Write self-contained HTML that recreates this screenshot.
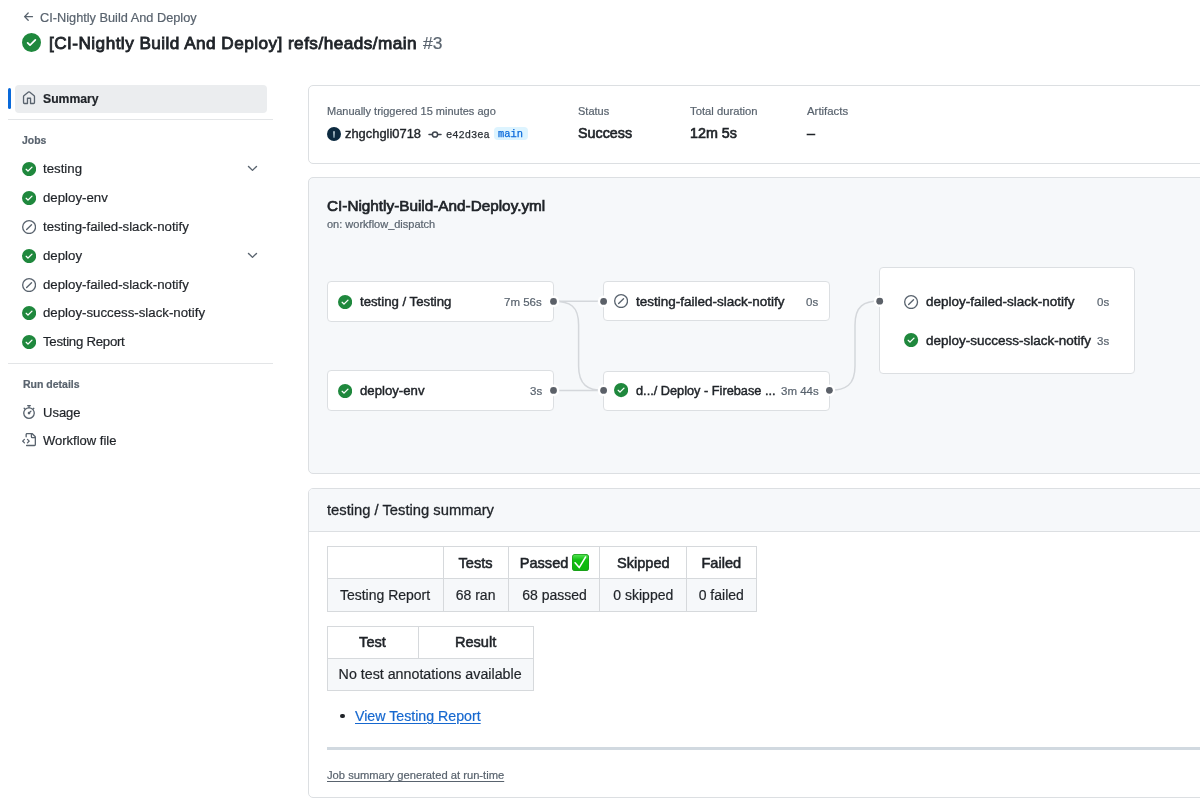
<!DOCTYPE html>
<html><head><meta charset="utf-8">
<style>
*{box-sizing:border-box;margin:0;padding:0}
html,body{width:1200px;height:802px;overflow:hidden;background:#fff}
body{font-family:"Liberation Sans",sans-serif;color:#1f2328;position:relative}
.a{position:absolute}
.t{position:absolute;white-space:nowrap;-webkit-text-stroke-width:0.2px;will-change:transform}
svg{position:absolute;display:block}
.mono{font-family:"Liberation Mono",monospace}
</style></head><body>
<svg style="left:21.65px;top:10.35px" width="13.7" height="13.7" viewBox="0 0 16 16" fill="#59636e"><path d="M7.78 12.53a.75.75 0 0 1-1.06 0L2.47 8.28a.75.75 0 0 1 0-1.06l4.25-4.25a.751.751 0 0 1 1.042.018.751.751 0 0 1 .018 1.042L4.81 7h7.44a.75.75 0 0 1 0 1.5H4.81l2.97 2.97a.75.75 0 0 1 0 1.06Z"/></svg>
<div class="t" style="left:39.6px;top:7.7px;font-size:12.75px;height:20px;line-height:20px;color:#59636e">CI-Nightly Build And Deploy</div>
<svg style="left:22px;top:33px" width="19" height="19" viewBox="0 0 16 16" fill="#1f883d"><path d="M8 16A8 8 0 1 1 8 0a8 8 0 0 1 0 16Zm3.78-9.72a.751.751 0 0 0-.018-1.042.751.751 0 0 0-1.042-.018L6.75 9.19 5.28 7.72a.751.751 0 0 0-1.042.018.751.751 0 0 0-.018 1.042l2 2a.75.75 0 0 0 1.06 0Z"/></svg>
<div class="t" style="left:49.4px;top:30.6px;font-size:17.2px;height:24px;line-height:24px;-webkit-text-stroke-width:0.85px;letter-spacing:0.45px">[CI-Nightly Build And Deploy] refs/heads/main</div>
<div class="t" style="left:423px;top:30.6px;font-size:17.4px;height:24px;line-height:24px;color:#59636e">#3</div>
<div class="a" style="left:8px;top:88px;width:3px;height:21px;border-radius:2px;background:#0969da"></div>
<div class="a" style="left:15px;top:85px;width:251.5px;height:27.5px;border-radius:4px;background:#ebedef"></div>
<svg style="left:21.75px;top:91.4px" width="14" height="14" viewBox="0 0 16 16" fill="#59636e"><path d="M6.906.664a1.749 1.749 0 0 1 2.187 0l5.25 4.2c.415.332.657.835.657 1.367v7.019A1.75 1.75 0 0 1 13.250 15h-3.5a.75.75 0 0 1-.75-.75V9H7v5.25a.75.75 0 0 1-.75.75h-3.5A1.75 1.75 0 0 1 1 13.25V6.23c0-.531.242-1.034.657-1.366l5.25-4.2Zm1.25 1.171a.25.25 0 0 0-.312 0l-5.25 4.2a.25.25 0 0 0-.094.196v7.019c0 .138.112.25.25.25H5.5V8.25a.75.75 0 0 1 .75-.75h3.5a.75.75 0 0 1 .75.75v5.25h2.75a.25.25 0 0 0 .25-.25V6.23a.25.25 0 0 0-.094-.195Z"/></svg>
<div class="t" style="left:43px;top:88.7px;font-size:12.2px;height:20px;line-height:20px;font-weight:bold">Summary</div>
<div class="a" style="left:8px;top:119px;width:265px;height:1px;background:#e3e5e7"></div>
<div class="t" style="left:22px;top:130.5px;font-size:10.4px;height:20px;line-height:20px;font-weight:bold;color:#59636e">Jobs</div>
<svg style="left:21.65px;top:162.1px" width="14.2" height="14.2" viewBox="0 0 16 16" fill="#1f883d"><path d="M8 16A8 8 0 1 1 8 0a8 8 0 0 1 0 16Zm3.78-9.72a.751.751 0 0 0-.018-1.042.751.751 0 0 0-1.042-.018L6.75 9.19 5.28 7.72a.751.751 0 0 0-1.042.018.751.751 0 0 0-.018 1.042l2 2a.75.75 0 0 0 1.06 0Z"/></svg>
<div class="t" style="left:43.3px;top:159.2px;font-size:13.25px;height:20px;line-height:20px">testing</div>
<svg style="left:245px;top:161.4px" width="15" height="15" viewBox="0 0 16 16" fill="#59636e"><path d="M12.78 5.22a.749.749 0 0 1 0 1.06l-4.25 4.25a.749.749 0 0 1-1.06 0L3.22 6.28a.749.749 0 0 1 .326-1.275.749.749 0 0 1 .734.215L8 8.939l3.72-3.719a.749.749 0 0 1 1.06 0Z"/></svg>
<svg style="left:21.65px;top:190.8px" width="14.2" height="14.2" viewBox="0 0 16 16" fill="#1f883d"><path d="M8 16A8 8 0 1 1 8 0a8 8 0 0 1 0 16Zm3.78-9.72a.751.751 0 0 0-.018-1.042.751.751 0 0 0-1.042-.018L6.75 9.19 5.28 7.72a.751.751 0 0 0-1.042.018.751.751 0 0 0-.018 1.042l2 2a.75.75 0 0 0 1.06 0Z"/></svg>
<div class="t" style="left:43.3px;top:187.9px;font-size:13.25px;height:20px;line-height:20px">deploy-env</div>
<svg style="left:21.65px;top:219.6px" width="14.2" height="14.2" viewBox="0 0 16 16" fill="#59636e"><path d="M8 0a8 8 0 1 1 0 16A8 8 0 0 1 8 0ZM1.5 8a6.5 6.5 0 1 0 13 0 6.5 6.5 0 0 0-13 0Zm9.78-2.22-5.5 5.5a.749.749 0 0 1-1.275-.326.749.749 0 0 1 .215-.734l5.5-5.5a.751.751 0 0 1 1.042.018.751.751 0 0 1 .018 1.042Z"/></svg>
<div class="t" style="left:43.3px;top:216.7px;font-size:13.25px;height:20px;line-height:20px">testing-failed-slack-notify</div>
<svg style="left:21.65px;top:248.5px" width="14.2" height="14.2" viewBox="0 0 16 16" fill="#1f883d"><path d="M8 16A8 8 0 1 1 8 0a8 8 0 0 1 0 16Zm3.78-9.72a.751.751 0 0 0-.018-1.042.751.751 0 0 0-1.042-.018L6.75 9.19 5.28 7.72a.751.751 0 0 0-1.042.018.751.751 0 0 0-.018 1.042l2 2a.75.75 0 0 0 1.06 0Z"/></svg>
<div class="t" style="left:43.3px;top:245.6px;font-size:13.25px;height:20px;line-height:20px">deploy</div>
<svg style="left:245px;top:247.8px" width="15" height="15" viewBox="0 0 16 16" fill="#59636e"><path d="M12.78 5.22a.749.749 0 0 1 0 1.06l-4.25 4.25a.749.749 0 0 1-1.06 0L3.22 6.28a.749.749 0 0 1 .326-1.275.749.749 0 0 1 .734.215L8 8.939l3.72-3.719a.749.749 0 0 1 1.06 0Z"/></svg>
<svg style="left:21.65px;top:277.5px" width="14.2" height="14.2" viewBox="0 0 16 16" fill="#59636e"><path d="M8 0a8 8 0 1 1 0 16A8 8 0 0 1 8 0ZM1.5 8a6.5 6.5 0 1 0 13 0 6.5 6.5 0 0 0-13 0Zm9.78-2.22-5.5 5.5a.749.749 0 0 1-1.275-.326.749.749 0 0 1 .215-.734l5.5-5.5a.751.751 0 0 1 1.042.018.751.751 0 0 1 .018 1.042Z"/></svg>
<div class="t" style="left:43.3px;top:274.6px;font-size:13.25px;height:20px;line-height:20px">deploy-failed-slack-notify</div>
<svg style="left:21.65px;top:306.2px" width="14.2" height="14.2" viewBox="0 0 16 16" fill="#1f883d"><path d="M8 16A8 8 0 1 1 8 0a8 8 0 0 1 0 16Zm3.78-9.72a.751.751 0 0 0-.018-1.042.751.751 0 0 0-1.042-.018L6.75 9.19 5.28 7.72a.751.751 0 0 0-1.042.018.751.751 0 0 0-.018 1.042l2 2a.75.75 0 0 0 1.06 0Z"/></svg>
<div class="t" style="left:43.3px;top:303.3px;font-size:13.25px;height:20px;line-height:20px">deploy-success-slack-notify</div>
<svg style="left:21.65px;top:334.9px" width="14.2" height="14.2" viewBox="0 0 16 16" fill="#1f883d"><path d="M8 16A8 8 0 1 1 8 0a8 8 0 0 1 0 16Zm3.78-9.72a.751.751 0 0 0-.018-1.042.751.751 0 0 0-1.042-.018L6.75 9.19 5.28 7.72a.751.751 0 0 0-1.042.018.751.751 0 0 0-.018 1.042l2 2a.75.75 0 0 0 1.06 0Z"/></svg>
<div class="t" style="left:43.3px;top:332px;font-size:13.25px;height:20px;line-height:20px;letter-spacing:-0.28px">Testing Report</div>
<div class="a" style="left:8px;top:362.5px;width:265px;height:1px;background:#e3e5e7"></div>
<div class="t" style="left:22.5px;top:374.2px;font-size:10.5px;height:20px;line-height:20px;font-weight:bold;color:#59636e">Run details</div>
<svg style="left:21.75px;top:405px" width="14" height="14" viewBox="0 0 16 16" fill="#59636e"><path d="M5.75.75A.75.75 0 0 1 6.5 0h3a.75.75 0 0 1 0 1.5h-.75v1l-.001.041a6.724 6.724 0 0 1 3.464 1.435l.007-.006.75-.75a.749.749 0 0 1 1.275.326.749.749 0 0 1-.215.734l-.75.75-.006.007a6.75 6.75 0 1 1-10.548 0L2.72 5.03l-.75-.75a.751.751 0 0 1 .018-1.042.751.751 0 0 1 1.042-.018l.75.75.007.006A6.72 6.72 0 0 1 7.25 2.541V1.5H6.5a.75.75 0 0 1-.75-.75ZM8 14.5A5.25 5.25 0 1 0 8 4a5.25 5.25 0 0 0 0 10.5Zm.389-6.7 1.33-1.33a.75.75 0 1 1 1.061 1.06L9.45 8.861A1.503 1.503 0 0 1 8 10.75a1.499 1.499 0 1 1 .389-2.95Z"/></svg>
<div class="t" style="left:43.2px;top:402.5px;font-size:13px;height:20px;line-height:20px">Usage</div>
<svg style="left:21.75px;top:433px" width="14" height="14" viewBox="0 0 16 16" fill="#59636e"><path d="M4 1.75C4 .784 4.784 0 5.75 0h5.586c.464 0 .909.184 1.237.513l2.914 2.914c.329.328.513.773.513 1.237v8.586A1.75 1.75 0 0 1 14.25 15h-9a.75.75 0 0 1 0-1.5h9a.25.25 0 0 0 .25-.25V6h-2.75A1.75 1.75 0 0 1 10 4.25V1.5H5.75a.25.25 0 0 0-.25.25v2.5a.75.75 0 0 1-1.5 0Zm1.72 4.97a.75.75 0 0 1 1.06 0l2 2a.75.75 0 0 1 0 1.06l-2 2a.749.749 0 0 1-1.275-.326.749.749 0 0 1 .215-.734l1.47-1.47-1.47-1.47a.75.75 0 0 1 0-1.06ZM3.28 7.78 1.81 9.25l1.47 1.47a.751.751 0 0 1-.018 1.042.751.751 0 0 1-1.042.018l-2-2a.75.75 0 0 1 0-1.06l2-2a.751.751 0 0 1 1.042.018.751.751 0 0 1 .018 1.042Zm8.22-6.218V4.25c0 .138.112.25.25.25h2.688l-.011-.013-2.914-2.914-.013-.011Z"/></svg>
<div class="t" style="left:43.2px;top:430.5px;font-size:13px;height:20px;line-height:20px">Workflow file</div>
<div class="a" style="left:307.8px;top:84.6px;width:922.2px;height:79px;border:1px solid #dcdfe2;border-radius:5px;background:#fff"></div>
<div class="t" style="left:327.3px;top:100.7px;font-size:11px;height:20px;line-height:20px;color:#59636e">Manually triggered 15 minutes ago</div>
<div class="a" style="left:327px;top:127.4px;width:14px;height:13.8px;border-radius:50%;background:#0c2a40"></div>
<div class="a" style="left:333.2px;top:131.2px;width:1.7px;height:7px;border-radius:1px;background:linear-gradient(#a9bcc6,#5f7d8f)"></div>
<div class="t" style="left:344.8px;top:123.7px;font-size:12.9px;height:20px;line-height:20px;-webkit-text-stroke-width:0.4px">zhgchgli0718</div>
<svg style="left:428px;top:128px" width="14" height="13" viewBox="428 128 14 13"><path d="M429 134.5H432.3M437.7 134.5H441" stroke="#3d444d" stroke-width="1.5" stroke-linecap="round"/><circle cx="435" cy="134.5" r="2.6" fill="none" stroke="#3d444d" stroke-width="1.5"/></svg>
<div class="t" style="left:445.5px;top:124.6px;font-size:10.4px;height:20px;line-height:20px;color:#2b3036;font-family:'Liberation Mono',monospace;-webkit-text-stroke:0.25px #2b3036">e42d3ea</div>
<div class="a" style="left:493.7px;top:126.5px;width:34.5px;height:13.7px;border-radius:4px;background:#ddf4ff"></div>
<div class="t" style="left:498px;top:124.2px;font-size:10.4px;height:20px;line-height:20px;color:#0969da;font-family:'Liberation Mono',monospace;-webkit-text-stroke:0.25px #0969da">main</div>
<div class="t" style="left:578px;top:100.7px;font-size:11px;height:20px;line-height:20px;color:#59636e">Status</div>
<div class="t" style="left:578px;top:122.9px;font-size:14.3px;height:20px;line-height:20px;-webkit-text-stroke:0.65px #1f2328">Success</div>
<div class="t" style="left:690px;top:100.7px;font-size:11.25px;height:20px;line-height:20px;color:#59636e">Total duration</div>
<div class="t" style="left:690px;top:122.9px;font-size:14.3px;height:20px;line-height:20px;-webkit-text-stroke:0.65px #1f2328">12m 5s</div>
<div class="t" style="left:806.7px;top:100.7px;font-size:11.4px;height:20px;line-height:20px;color:#59636e">Artifacts</div>
<div class="t" style="left:806.7px;top:122.9px;font-size:14.3px;height:20px;line-height:20px;-webkit-text-stroke:0.65px #1f2328">&ndash;</div>
<div class="a" style="left:307.8px;top:176.8px;width:922.2px;height:297.5px;border:1px solid #dcdfe2;border-radius:5px;background:#f6f8fa"></div>
<div class="t" style="left:327.2px;top:196.3px;font-size:15.3px;height:20px;line-height:20px;-webkit-text-stroke-width:0.7px">CI-Nightly-Build-And-Deploy.yml</div>
<div class="t" style="left:327.4px;top:214px;font-size:11px;height:20px;line-height:20px;color:#59636e">on: workflow_dispatch</div>
<svg style="left:0;top:0" width="1200" height="802" viewBox="0 0 1200 802"><g fill="none" stroke="#d4d7db" stroke-width="1.5">
<path d="M553.3 301.3H603.5"/>
<path d="M553.3 390.4H603.5"/>
<path d="M553.3 301.3C570 301.3 578.6 306 578.6 325V366C578.6 385 588 390.4 603.5 390.4"/>
<path d="M829.3 390.3C846 390.3 855 385 855 366V325C855 306 864 301.1 879.7 301.1"/>
</g></svg>
<div class="a" style="left:326.9px;top:280.8px;width:227.4px;height:40.9px;border:1px solid #dcdfe2;border-radius:4px;background:#fff"></div>
<svg style="left:338.2px;top:294.5px" width="14.2" height="14.2" viewBox="0 0 16 16" fill="#1f883d"><path d="M8 16A8 8 0 1 1 8 0a8 8 0 0 1 0 16Zm3.78-9.72a.751.751 0 0 0-.018-1.042.751.751 0 0 0-1.042-.018L6.75 9.19 5.28 7.72a.751.751 0 0 0-1.042.018.751.751 0 0 0-.018 1.042l2 2a.75.75 0 0 0 1.06 0Z"/></svg>
<div class="t" style="left:359.5px;top:292.1px;font-size:13.2px;height:20px;line-height:20px;-webkit-text-stroke-width:0.45px">testing / Testing</div>
<div class="t" style="right:658px;top:292.1px;font-size:11.5px;height:20px;line-height:20px;color:#59636e">7m 56s</div>
<div class="a" style="left:326.9px;top:370.4px;width:227.4px;height:40.5px;border:1px solid #dcdfe2;border-radius:4px;background:#fff"></div>
<svg style="left:338.2px;top:383.5px" width="14.2" height="14.2" viewBox="0 0 16 16" fill="#1f883d"><path d="M8 16A8 8 0 1 1 8 0a8 8 0 0 1 0 16Zm3.78-9.72a.751.751 0 0 0-.018-1.042.751.751 0 0 0-1.042-.018L6.75 9.19 5.28 7.72a.751.751 0 0 0-1.042.018.751.751 0 0 0-.018 1.042l2 2a.75.75 0 0 0 1.06 0Z"/></svg>
<div class="t" style="left:359.5px;top:381.2px;font-size:13.2px;height:20px;line-height:20px;-webkit-text-stroke-width:0.45px">deploy-env</div>
<div class="t" style="right:658px;top:381.2px;font-size:11.5px;height:20px;line-height:20px;color:#59636e">3s</div>
<div class="a" style="left:602.8px;top:281px;width:227.1px;height:40.4px;border:1px solid #dcdfe2;border-radius:4px;background:#fff"></div>
<svg style="left:614.3px;top:294.3px" width="14.2" height="14.2" viewBox="0 0 16 16" fill="#59636e"><path d="M8 0a8 8 0 1 1 0 16A8 8 0 0 1 8 0ZM1.5 8a6.5 6.5 0 1 0 13 0 6.5 6.5 0 0 0-13 0Zm9.78-2.22-5.5 5.5a.749.749 0 0 1-1.275-.326.749.749 0 0 1 .215-.734l5.5-5.5a.751.751 0 0 1 1.042.018.751.751 0 0 1 .018 1.042Z"/></svg>
<div class="t" style="left:636px;top:292.1px;font-size:13.5px;height:20px;line-height:20px;-webkit-text-stroke-width:0.45px">testing-failed-slack-notify</div>
<div class="t" style="right:381.4px;top:292.1px;font-size:11.5px;height:20px;line-height:20px;color:#59636e">0s</div>
<div class="a" style="left:602.8px;top:370.6px;width:227.1px;height:40px;border:1px solid #dcdfe2;border-radius:4px;background:#fff"></div>
<svg style="left:614.3px;top:383.4px" width="14.2" height="14.2" viewBox="0 0 16 16" fill="#1f883d"><path d="M8 16A8 8 0 1 1 8 0a8 8 0 0 1 0 16Zm3.78-9.72a.751.751 0 0 0-.018-1.042.751.751 0 0 0-1.042-.018L6.75 9.19 5.28 7.72a.751.751 0 0 0-1.042.018.751.751 0 0 0-.018 1.042l2 2a.75.75 0 0 0 1.06 0Z"/></svg>
<div class="t" style="left:636px;top:381.2px;font-size:12.75px;height:20px;line-height:20px;-webkit-text-stroke-width:0.45px">d.../ Deploy - Firebase ...</div>
<div class="t" style="right:381.4px;top:381.2px;font-size:11.5px;height:20px;line-height:20px;color:#59636e">3m 44s</div>
<div class="a" style="left:878.7px;top:266.7px;width:255.9px;height:107.2px;border:1px solid #dcdfe2;border-radius:4px;background:#fff"></div>
<svg style="left:904.4px;top:294.6px" width="14.2" height="14.2" viewBox="0 0 16 16" fill="#59636e"><path d="M8 0a8 8 0 1 1 0 16A8 8 0 0 1 8 0ZM1.5 8a6.5 6.5 0 1 0 13 0 6.5 6.5 0 0 0-13 0Zm9.78-2.22-5.5 5.5a.749.749 0 0 1-1.275-.326.749.749 0 0 1 .215-.734l5.5-5.5a.751.751 0 0 1 1.042.018.751.751 0 0 1 .018 1.042Z"/></svg>
<div class="t" style="left:926px;top:292.1px;font-size:13.5px;height:20px;line-height:20px;-webkit-text-stroke-width:0.45px">deploy-failed-slack-notify</div>
<div class="t" style="right:91px;top:292.1px;font-size:11.5px;height:20px;line-height:20px;color:#59636e">0s</div>
<svg style="left:904.4px;top:333.1px" width="14.2" height="14.2" viewBox="0 0 16 16" fill="#1f883d"><path d="M8 16A8 8 0 1 1 8 0a8 8 0 0 1 0 16Zm3.78-9.72a.751.751 0 0 0-.018-1.042.751.751 0 0 0-1.042-.018L6.75 9.19 5.28 7.72a.751.751 0 0 0-1.042.018.751.751 0 0 0-.018 1.042l2 2a.75.75 0 0 0 1.06 0Z"/></svg>
<div class="t" style="left:926px;top:330.8px;font-size:13.5px;height:20px;line-height:20px;-webkit-text-stroke-width:0.45px">deploy-success-slack-notify</div>
<div class="t" style="right:91px;top:330.8px;font-size:11.5px;height:20px;line-height:20px;color:#59636e">3s</div>
<svg style="left:0;top:0" width="1200" height="802" viewBox="0 0 1200 802"><circle cx="553.5" cy="301.4" r="5.8" fill="#fff"/><circle cx="553.5" cy="301.4" r="3.4" fill="#5b6068"/><circle cx="603.6" cy="301.4" r="5.8" fill="#fff"/><circle cx="603.6" cy="301.4" r="3.4" fill="#5b6068"/><circle cx="553.5" cy="390.4" r="5.8" fill="#fff"/><circle cx="553.5" cy="390.4" r="3.4" fill="#5b6068"/><circle cx="603.6" cy="390.4" r="5.8" fill="#fff"/><circle cx="603.6" cy="390.4" r="3.4" fill="#5b6068"/><circle cx="829.4" cy="390.3" r="5.8" fill="#fff"/><circle cx="829.4" cy="390.3" r="3.4" fill="#5b6068"/><circle cx="879.7" cy="301.2" r="5.8" fill="#fff"/><circle cx="879.7" cy="301.2" r="3.4" fill="#5b6068"/></svg>
<div class="a" style="left:307.8px;top:488.2px;width:922.2px;height:310.3px;border:1px solid #dcdfe2;border-radius:5px;background:#fff;overflow:hidden"></div>
<div class="a" style="left:308.8px;top:489.2px;width:920.2px;height:42.8px;background:#f6f8fa;border-bottom:1px solid #dcdfe2;border-radius:4px 4px 0 0"></div>
<div class="t" style="left:327.3px;top:500.1px;font-size:14.75px;height:20px;line-height:20px;-webkit-text-stroke-width:0.3px">testing / Testing summary</div>
<div class="a" style="left:327.2px;top:546px;width:429.6px;height:66px;background:#fff;border:1px solid #d6d9dc"></div>
<div class="a" style="left:327.2px;top:578.3px;width:429.6px;height:33.7px;background:#f6f8fa;border:1px solid #d6d9dc"></div>
<div class="a" style="left:442.8px;top:546px;width:1px;height:66px;background:#d6d9dc"></div>
<div class="a" style="left:508px;top:546px;width:1px;height:66px;background:#d6d9dc"></div>
<div class="a" style="left:599.2px;top:546px;width:1px;height:66px;background:#d6d9dc"></div>
<div class="a" style="left:685.8px;top:546px;width:1px;height:66px;background:#d6d9dc"></div>
<div class="t" style="left:327.2px;width:116.1px;text-align:center;top:584.8px;height:20px;line-height:20px;font-size:14px">Testing Report</div>
<div class="t" style="left:443.3px;width:65.2px;text-align:center;top:552.5px;height:20px;line-height:20px;font-size:14.6px;-webkit-text-stroke-width:0.55px">Tests</div>
<div class="t" style="left:443.3px;width:65.2px;text-align:center;top:584.8px;height:20px;line-height:20px;font-size:14px">68 ran</div>
<div class="t" style="left:508.5px;width:91.2px;text-align:center;top:552.5px;height:20px;line-height:20px;font-size:14.6px;-webkit-text-stroke-width:0.55px">Passed <span style="display:inline-block;width:17px;height:17px;vertical-align:-3px"></span></div>
<div class="t" style="left:508.5px;width:91.2px;text-align:center;top:584.8px;height:20px;line-height:20px;font-size:14px">68 passed</div>
<div class="t" style="left:599.7px;width:86.6px;text-align:center;top:552.5px;height:20px;line-height:20px;font-size:14.6px;-webkit-text-stroke-width:0.55px">Skipped</div>
<div class="t" style="left:599.7px;width:86.6px;text-align:center;top:584.8px;height:20px;line-height:20px;font-size:14px">0 skipped</div>
<div class="t" style="left:686.3px;width:70.5px;text-align:center;top:552.5px;height:20px;line-height:20px;font-size:14.6px;-webkit-text-stroke-width:0.55px">Failed</div>
<div class="t" style="left:686.3px;width:70.5px;text-align:center;top:584.8px;height:20px;line-height:20px;font-size:14px">0 failed</div>
<div class="a" style="left:571.7px;top:554px;width:17.1px;height:17px;border-radius:3.5px;background:linear-gradient(#5de65d,#10c010 35%,#0db50d);box-shadow:inset 0 0 0 0.7px #1c9a1c"></div>
<svg style="left:571.7px;top:554px" width="17" height="17" viewBox="0 0 17 17"><path d="M3.1 8.7 7.2 13.6 13.6 3" fill="none" stroke="#fff" stroke-width="1.5" stroke-linecap="round" stroke-linejoin="round"/></svg>
<div class="a" style="left:327.4px;top:625.7px;width:206.2px;height:65.3px;background:#fff;border:1px solid #d6d9dc"></div>
<div class="a" style="left:327.4px;top:658px;width:206.2px;height:33px;background:#f6f8fa;border:1px solid #d6d9dc"></div>
<div class="a" style="left:417.9px;top:625.7px;width:1px;height:32.3px;background:#d6d9dc"></div>
<div class="t" style="left:327.4px;width:91px;text-align:center;top:632px;height:20px;line-height:20px;font-size:14.6px;-webkit-text-stroke-width:0.55px">Test</div>
<div class="t" style="left:418.4px;width:115.2px;text-align:center;top:632px;height:20px;line-height:20px;font-size:14.6px;-webkit-text-stroke-width:0.55px">Result</div>
<div class="t" style="left:327.4px;width:206.2px;text-align:center;top:664.3px;height:20px;line-height:20px;font-size:14.25px">No test annotations available</div>
<div class="a" style="left:340.3px;top:714px;width:4.4px;height:4.4px;border-radius:50%;background:#1f2328"></div>
<div class="t" style="left:355.2px;top:705.6px;font-size:14.2px;height:20px;line-height:20px;color:#1668cf;text-decoration:underline;text-underline-offset:2px">View Testing Report</div>
<div class="a" style="left:327px;top:747px;width:902px;height:3px;background:#d1d9e0"></div>
<div class="t" style="left:327px;top:765.2px;font-size:11.2px;height:20px;line-height:20px;color:#59636e;text-decoration:underline;text-underline-offset:2px">Job summary generated at run-time</div>
</body></html>
